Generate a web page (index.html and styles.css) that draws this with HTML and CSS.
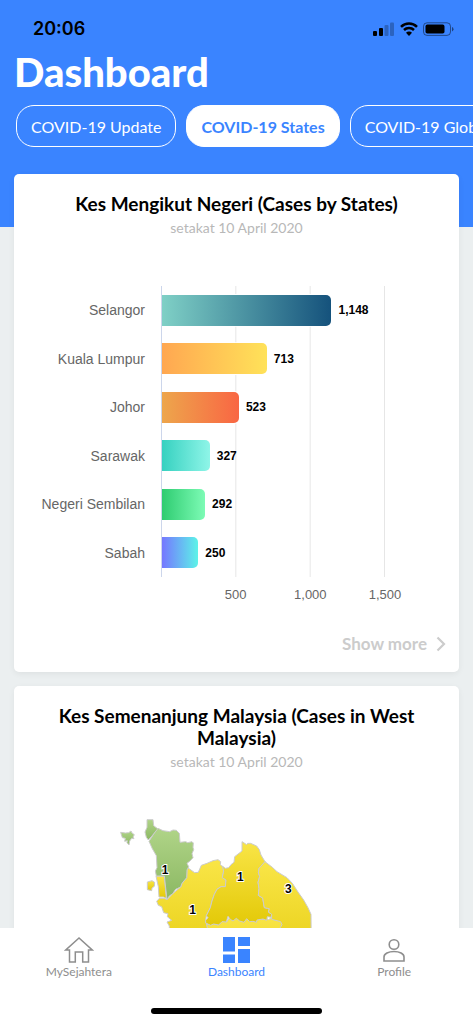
FILE: index.html
```html
<!DOCTYPE html>
<html lang="en">
  <head>
    <meta charset="UTF-8" />
    <meta name="viewport" content="width=device-width, initial-scale=1.0" />
    <title>Dashboard</title>
    <link rel="stylesheet" href="styles.css">
  </head>

  <body>
    <div class="screen">
      <header class="header">
        <div class="status-bar">
          <span class="time">20:06</span>
          <svg class="status-icons" viewBox="0 0 81 14" width="81" height="14">
            <rect x="0" y="9" width="4" height="5" rx="1" />
            <rect x="6" y="6" width="4" height="8" rx="1" />
            <rect x="11.500" y="3" width="4" height="11" rx="1" opacity="0.25" />
            <rect x="17" y="0.500" width="4" height="13.500" rx="1" opacity="0.25" />
            <path d="M28 4.800a11.300 11.300 0 0 1 16 0M31 8a7.100 7.100 0 0 1 10 0" fill="none" stroke="#000" stroke-width="2.500" />
            <path d="M33 10.800a4.200 4.200 0 0 1 6 0L36 14z" />
            <rect x="50.500" y="0.800" width="27" height="12.600" rx="3.500" fill="none" stroke="#000" opacity="0.45" />
            <rect x="52.500" y="2.600" width="19" height="9" rx="1.800" />
            <path d="M79 5v4.400q1.500-.6 1.500-2.200T79 5z" opacity="0.5" />
          </svg>
        </div>
        <h1>Dashboard</h1>
        <div class="tabs">
          <button class="tab" type="button">COVID-19 Update</button>
          <button class="tab active" type="button">COVID-19 States</button>
          <button class="tab" type="button">COVID-19 Global</button>
        </div>
      </header>

      <main class="cards">
        <section class="card">
          <h2>Kes Mengikut Negeri (Cases by States)</h2>
          <p class="date">setakat 10 April 2020</p>
          <div class="chart">
            <div class="labels">
              <span>Selangor</span>
              <span>Kuala Lumpur</span>
              <span>Johor</span>
              <span>Sarawak</span>
              <span>Negeri Sembilan</span>
              <span>Sabah</span>
            </div>
            <div class="plot">
              <div class="row"><div class="bar selangor" style="width: 76%"></div><b>1,148</b></div>
              <div class="row"><div class="bar kl" style="width: 47%"></div><b>713</b></div>
              <div class="row"><div class="bar johor" style="width: 34.500%"></div><b>523</b></div>
              <div class="row"><div class="bar sarawak" style="width: 21.400%"></div><b>327</b></div>
              <div class="row"><div class="bar sembilan" style="width: 19.300%"></div><b>292</b></div>
              <div class="row"><div class="bar sabah" style="width: 16.300%"></div><b>250</b></div>
            </div>
            <div class="axis">
              <span>500</span>
              <span>1,000</span>
              <span>1,500</span>
            </div>
          </div>
          <a class="more" href="#">
            Show more
            <svg viewBox="0 0 10 16" width="10" height="16"><path d="M1.500 1.500 8 8l-6.500 6.500" fill="none" stroke="currentColor" stroke-width="2.200" /></svg>
          </a>
        </section>

        <section class="card">
          <h2>Kes Semenanjung Malaysia (Cases in West Malaysia)</h2>
          <p class="date">setakat 10 April 2020</p>
          <svg class="map" viewBox="50 50 720 600" width="240" height="200">
            <defs>
              <linearGradient id="green" x1="0" y1="0" x2="0" y2="1">
                <stop offset="0" stop-color="#b0d488" />
                <stop offset="1" stop-color="#8bb862" />
              </linearGradient>
              <linearGradient id="yellow" x1="0" y1="0" x2="0" y2="1">
                <stop offset="0" stop-color="#f9e547" />
                <stop offset="1" stop-color="#e3c908" />
              </linearGradient>
            </defs>
            <g fill="url(#yellow)">
              <path d="M318 375l22-1 15 3 10-12 14 3 11-17 18 5 10-4 13 7 8-9 9 9 10-4 30 5 8-6 8 7 17-10 30 14v230H318z" />
              <path d="M262 205 283 220 294 219 303 198 320 192 338 184 353 181 361 187 360 196 368 203 370 215 366 235 377 242 375 262 362 262 350 270 342 285 335 305 330 325 318 349 316 363 322 390 320 560 205 560 207 380 200 368 214 363 201 352 203 343 190 340 184 322 174 318 169 306 177 297 192 297 200 301 217 283 241 263 245 252 259 235 260 212z" />
              <path d="M425 127 433 132 439 136 442 132 451 132 469 140 477 151 482 167 494 187 476 207 474 221 478 231 473 249 476 267 474 288 487 296 492 325 507 328 504 338 514 345 512 354 501 352 499 363 488 359 470 362 468 369 458 366 448 367 439 358 431 369 418 365 408 357 398 365 390 360 383 351 378 368 365 367 355 377 340 374 331 378 316 371 316 363 323 355 318 349 330 325 335 305 342 285 350 270 362 262 375 262 377 242 366 235 370 215 366 200 375 207 385 205 393 195 401 189 403 172 425 155z" />
              <path d="M494 187 516 204 530 217 560 235 576 252 593 278 610 302 623 325 632 345 634 560 544 540 540 385 545 376 541 367 514 360 514 345 504 338 507 328 492 325 487 296 474 288 476 267 473 249 478 231 474 221 476 207z" />
              <path d="M141 248l14-4 8 5-1 12-7 5-1 8-13-3z" />
              <path d="M167 230h25l6 67-9-4h-13l-2-31z" />
            </g>
            <g fill="url(#green)">
              <path d="M61 99l14 2 10-1 7-5 3 6 7 5-4 7 3 5-7-1-6 8-2 12-6-7 1-6-8 2 2-9-9-2z" />
              <path d="M140 61h18l2 18 13 10-12 14-17 19-6-8-4-16 6-14z" />
              <path d="M173 87 188 94 208 97 218 92 228 93 237 102 239 129 256 127 262 130 275 127 279 131 278 144 280 151 275 163 278 175 269 185 260 192 265 202 260 212 259 235 245 252 241 263 226 270 217 283 207 290 200 301 192 230 168 230 165 215 170 205 168 169 156 148 146 126 160 104z" />
            </g>
            <g class="map-labels">
              <text x="194" y="223">1</text>
              <text x="277" y="343">1</text>
              <text x="420" y="244">1</text>
              <text x="564" y="282">3</text>
            </g>
          </svg>
        </section>
      </main>
    </div>

    <nav class="nav">
      <div class="nav-items">
        <a href="#">
          <svg viewBox="0 0 30 28" width="30" height="28" fill="none" stroke="currentColor" stroke-width="1.500"><path d="M15 2 1.800 14h3.700v12h5.800V16h7.400v10h5.800V14h3.700z" /></svg>
          MySejahtera
        </a>
        <a class="current" href="#">
          <svg viewBox="0 0 28 28" width="28" height="28" fill="currentColor"><path d="M1 1h12v14.500H1zM16 1h12v9H16zM1 18.500h12v8.500H1zM16 13h12v14H16z" /></svg>
          Dashboard
        </a>
        <a href="#">
          <svg viewBox="0 0 28 28" width="28" height="28" fill="none" stroke="currentColor" stroke-width="1.600"><circle cx="14" cy="8.500" r="4.800" /><path d="M4 25v-4c0-3.200 4.500-5.500 10-5.500s10 2.300 10 5.500v4z" /></svg>
          Profile
        </a>
      </div>
      <div class="home-bar"></div>
    </nav>
  </body>
</html>
```
FILE: styles.css
```css
* {
  box-sizing: border-box;
}
body {
  margin: 0;
  height: 100vh;
  display: flex;
  flex-direction: column;
  font-family: Lato, "Open Sans", sans-serif;
  background-color: #ebeff0;
}
a {
  text-decoration: none;
}
h1,
h2,
p {
  margin: 0;
}
.screen {
  flex: 1;
  min-height: 0;
  overflow-y: auto;
  scrollbar-width: none;
}

/* header */
.header {
  padding-bottom: 80px;
  background-color: #3a84ff;
}
.status-bar {
  height: 49px;
  padding: 8px 19px 0 33px;
  display: flex;
  justify-content: space-between;
  align-items: center;
}
.time {
  font-family: Inter, sans-serif;
  font-size: 18px;
  font-weight: 600;
}
h1 {
  padding-left: 14px;
  font-size: 40px;
  font-weight: 900;
  line-height: 46px;
  color: #fff;
}
.tabs {
  margin-top: 10px;
  padding-left: 16px;
  display: flex;
  gap: 10px;
  overflow: hidden;
}
.tab {
  flex: none;
  height: 42px;
  padding: 0 14px;
  border: 1px solid #fff;
  border-radius: 18px;
  background-color: transparent;
  font-family: inherit;
  font-size: 16px;
  color: #fff;
}
.tab.active {
  background-color: #fff;
  font-weight: 700;
  color: #3a84ff;
}

/* cards */
.cards {
  margin-top: -53px;
  padding: 0 14px 14px;
  display: flex;
  flex-direction: column;
  gap: 14px;
}
.card {
  padding-top: 19px;
  border-radius: 5px;
  background-color: #fff;
  box-shadow: 0 2px 6px rgba(0, 0, 0, 0.06);
}
h2 {
  padding: 0 24px;
  font-size: 19px;
  line-height: 22px;
  text-align: center;
}
.date {
  margin-top: 3px;
  font-size: 14px;
  line-height: 20px;
  text-align: center;
  color: #b8b8b8;
}

/* bar chart */
.chart {
  margin-top: 48px;
  padding-right: 74px;
  display: grid;
  grid-template-columns: 131px 1fr;
  grid-template-rows: 291px 34px;
  column-gap: 16px;
  font-family: "Liberation Sans", Arial, sans-serif;
  color: #666;
}
.labels,
.plot {
  display: grid;
  grid-template-rows: repeat(6, 1fr);
  align-items: center;
}
.labels {
  font-size: 14px;
  text-align: right;
}
.plot {
  border-left: 1px solid #ccd6eb;
  background-image: linear-gradient(to left, #e6e6e6 1px, transparent 1px);
  background-size: calc(100% / 3) 100%;
}
.row {
  display: flex;
  align-items: center;
  gap: 7px;
}
.row b {
  font-size: 12px;
  color: #000;
  text-shadow: 0 0 2px #fff;
}
.bar {
  flex: none;
  height: 31px;
  border-radius: 0 5px 5px 0;
  box-shadow: 1px 0 0 1px #fff;
  clip-path: inset(-1px -2px -1px 0);
}
.selangor {
  background-image: linear-gradient(to right, #7fd0c6, #15527c);
}
.kl {
  background-image: linear-gradient(to right, #ffa751, #ffe259);
}
.johor {
  background-image: linear-gradient(to right, #eda64c, #f96643);
}
.sarawak {
  background-image: linear-gradient(to right, #36d1c0, #8ff5e8);
}
.sembilan {
  background-image: linear-gradient(to right, #2ecc71, #7dfbb5);
}
.sabah {
  background-image: linear-gradient(to right, #7577ff, #5cf3e8);
}
.axis {
  grid-column: 2;
  margin: 0 calc(-100% / 6) 0 calc(100% / 6);
  display: grid;
  grid-template-columns: repeat(3, 1fr);
  align-items: center;
  font-size: 13px;
  text-align: center;
}
.more {
  margin-top: 22px;
  padding: 0 13px 17px;
  display: flex;
  justify-content: flex-end;
  align-items: center;
  gap: 9px;
  font-size: 17px;
  font-weight: 700;
  line-height: 22px;
  color: #ccc;
}

/* map */
.map {
  display: block;
  margin: 44px auto 0;
}
.map path {
  stroke: #ccc;
  stroke-width: 3;
}
.map-labels {
  font-family: "Liberation Sans", Arial, sans-serif;
  font-size: 36px;
  font-weight: 700;
  text-anchor: middle;
  paint-order: stroke;
  stroke: #fff;
  stroke-width: 6px;
}

/* bottom navigation */
.nav {
  padding: 8px 0 9px;
  background-color: #fff;
}
.nav-items {
  display: grid;
  grid-template-columns: repeat(3, 1fr);
}
.nav-items a {
  display: flex;
  flex-direction: column;
  align-items: center;
  font-size: 12px;
  line-height: 16px;
  color: #8e8e8e;
}
.nav-items a.current {
  color: #3a84ff;
}
.home-bar {
  width: 36%;
  height: 6px;
  margin: 28px auto 0;
  border-radius: 3px;
  background-color: #000;
}
```
